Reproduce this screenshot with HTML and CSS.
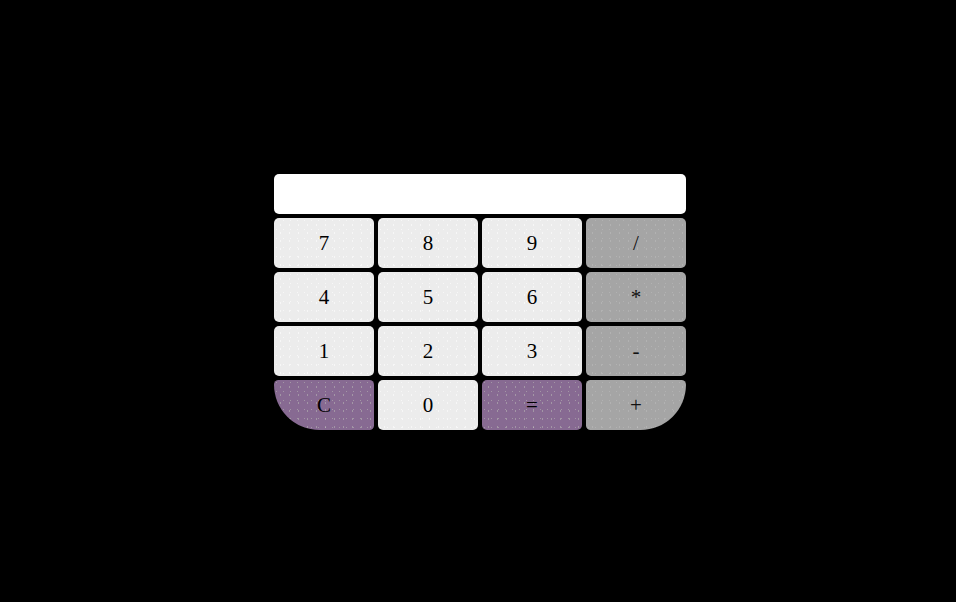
FILE: index.html
```html
<!DOCTYPE html>
<html lang="en">

<head>
    <meta charset="UTF-8" />
    <title>Calculator</title>
    <link rel="stylesheet" href="styles.css">
</head>

<body>
    <div class="calculator">
        <input class="display" type="text" readonly />
        <div class="keys">
            <button class="key">7</button>
            <button class="key">8</button>
            <button class="key">9</button>
            <button class="key operator">/</button>
            <button class="key">4</button>
            <button class="key">5</button>
            <button class="key">6</button>
            <button class="key operator">*</button>
            <button class="key">1</button>
            <button class="key">2</button>
            <button class="key">3</button>
            <button class="key operator">-</button>
            <button class="key action corner-left">C</button>
            <button class="key">0</button>
            <button class="key action">=</button>
            <button class="key operator corner-right">+</button>
        </div>
    </div>
</body>

</html>
```

FILE: styles.css
```css
html,
body {
    height: 100%;
}

body {
    margin: 0;
    background-color: #000;
    display: flex;
    align-items: center;
    justify-content: center;
    padding: 2px 0 0 4px;
    box-sizing: border-box;
}

.calculator {
    width: 412px;
    display: flex;
    flex-direction: column;
    gap: 4px;
}

.display {
    height: 40px;
    box-sizing: border-box;
    border: none;
    border-radius: 5px;
    background-color: #fff;
    padding: 0 10px;
}

.keys {
    display: grid;
    grid-template-columns: repeat(4, 100px);
    grid-auto-rows: 50px;
    gap: 4px;
}

.key {
    --dot: rgba(255, 255, 255, 0.6);
    border: none;
    border-radius: 5px;
    padding: 0;
    color: #000;
    font-family: "Liberation Serif", serif;
    font-size: 21px;
    background-color: #ececec;
    background-image:
        radial-gradient(circle, var(--dot) 0.5px, transparent 0.9px),
        radial-gradient(circle, var(--dot) 0.5px, transparent 0.9px);
    background-size: 9px 8px, 7px 9px;
    background-position: 2px 3px, 6px 7px;
    background-origin: border-box;
}

.operator {
    --dot: rgba(255, 255, 255, 0.15);
    background-color: #a5a5a5;
    color: #111;
}

.action {
    --dot: rgba(205, 215, 195, 0.4);
    background-color: #876a92;
}

.corner-left {
    border-bottom-left-radius: 50px;
}

.corner-right {
    border-bottom-right-radius: 50px;
}
```
